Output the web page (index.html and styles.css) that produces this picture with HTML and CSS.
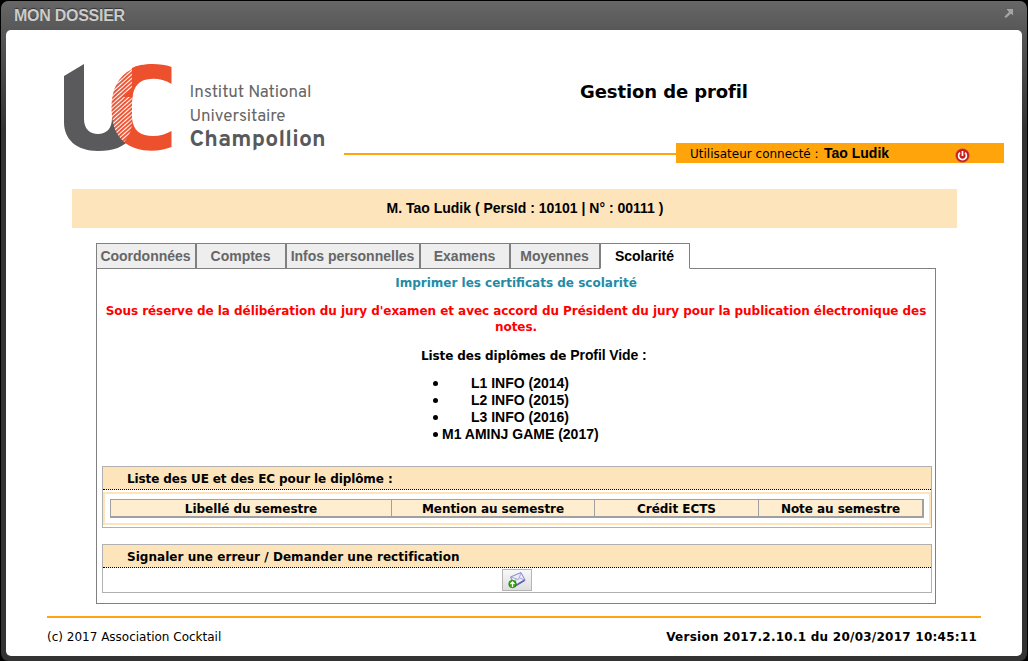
FILE: index.html
```html
<!DOCTYPE html>
<html lang="fr">
<head>
<meta charset="utf-8">
<title>Mon dossier</title>
<link rel="stylesheet" href="styles.css">
</head>
<body>
<div class="window">
  <div class="titlebar">
    <span class="caption">MON DOSSIER</span>
    <svg class="expand" width="13" height="13" viewBox="0 0 13 13"><path d="M3.500 1.500h8v8l-2.500-2.500-5 4.500-2-2L6.500 5z" fill="#a5a5a5" stroke="#4c4c4c" stroke-width=".6"/></svg>
  </div>
  <main class="panel">
    <header class="header">
      <svg class="logo" width="280" height="105" viewBox="60 55 280 105">
        <defs>
          <pattern id="hatch" width="3" height="3" patternUnits="userSpaceOnUse" patternTransform="rotate(-42)">
            <rect width="3" height="3" fill="#fff"/><rect width="3" height="1.900" fill="#ed502d"/>
          </pattern>
        </defs>
        <path d="M64 76L84 64V119C84 129 90 134 98 134C106 134 112 129 112 118H132V138C123 147 114 151 98 151C76 151 64 139 64 122Z" fill="#5a5a5c"/>
        <path d="M132 68C139 64 158 62 171.500 67V84C161 77 148 78 142 81C134 85 132 94 132 106V118C133 131 141 136 153 136C160 136 166 134 171.500 131V147C157 153 135 152 124 142Z" fill="#ed502d"/>
        <path d="M132 69C118 76 111 90 111.500 109C112 124 115 134 124 142C129 136 132 130 132 122Z" fill="url(#hatch)"/>
        <path d="M132.500 87V97H123Z" fill="#ed502d"/>
        <text x="189.500" y="97" textLength="122" class="logo-light">Institut National</text>
        <text x="189.500" y="120.500" textLength="96" class="logo-light">Universitaire</text>
        <text x="189.500" y="146" textLength="136" class="logo-bold">Champollion</text>
      </svg>
      <div class="heading">
        <h1>Gestion de profil</h1>
        <div class="user-row">
          <div class="rule"></div>
          <div class="user"><span class="user-label">Utilisateur connecté :</span><b>Tao Ludik</b>
            <svg class="power" width="15" height="15" viewBox="0 0 15 15"><circle cx="7.500" cy="7.500" r="7" fill="#c81e1c" stroke="#d98a66" stroke-width=".6"/><path d="M5 4.700a3.900 3.900 0 1 0 5 0M7.500 3v5" fill="none" stroke="#fff" stroke-width="1.700"/></svg>
          </div>
        </div>
      </div>
    </header>
    <div class="identity">M. Tao Ludik ( PersId : 10101 | N° : 00111 )</div>
    <nav class="tabs">
      <span class="tab">Coordonnées</span><span class="tab">Comptes</span><span class="tab">Infos personnelles</span><span class="tab">Examens</span><span class="tab">Moyennes</span><span class="tab active">Scolarité</span>
    </nav>
    <section class="content">
      <a class="print">Imprimer les certificats de scolarité</a>
      <p class="warning">Sous réserve de la délibération du jury d'examen et avec accord du Président du jury pour la publication électronique des<br>notes.</p>
      <p class="list-title">Liste des diplômes de <span>Profil Vide :</span></p>
      <ul class="diplomas">
        <li>L1 INFO (2014)</li><li>L2 INFO (2015)</li><li>L3 INFO (2016)</li><li class="wide">M1 AMINJ GAME (2017)</li>
      </ul>
      <div class="box">
        <h2>Liste des UE et des EC pour le diplôme :</h2>
        <div class="inset">
          <div class="columns"><span>Libellé du semestre</span><span>Mention au semestre</span><span>Crédit ECTS</span><span>Note au semestre</span></div>
        </div>
      </div>
      <div class="box report">
        <h2>Signaler une erreur / Demander une rectification</h2>
        <button class="mail" aria-label="Envoyer">
          <svg width="20" height="18" viewBox="0 0 20 18"><path d="M3.500 6L14 1.500 18 9 8 15z" fill="#e9eafa" stroke="#8583c4"/><path d="M18 9L8 15" stroke="#6260ae" stroke-width="1.600"/><path d="M4 6l7.500 2.500L14 2M8 15l1-7M18 9l-5.500-2" fill="none" stroke="#9a99d0" stroke-width=".8"/><circle cx="5.500" cy="13" r="3.800" fill="#36a50d" stroke="#187500" stroke-width=".6"/><path d="M5.500 16v-5M3.500 13l2-2 2 2" fill="none" stroke="#fff" stroke-width="1.300"/></svg>
        </button>
      </div>
    </section>
    <footer class="footer"><span>(c) 2017 Association Cocktail</span><b>Version 2017.2.10.1 du 20/03/2017 10:45:11</b></footer>
  </main>
</div>
</body>
</html>
```
FILE: styles.css
```css
* { box-sizing: border-box; }
body { margin: 0; background: #000; font-family: "DejaVu Sans", Verdana, sans-serif; font-size: 12px; color: #000; }
.window { width: 1028px; height: 661px; border: 1px solid #000; border-bottom: 0; border-radius: 8px; padding: 0 5px 5px; background: linear-gradient(#676767, #575757 30px, #333 130px, #333); overflow: hidden; }
.titlebar { height: 29px; display: flex; justify-content: space-between; padding: 6px 7px 0 8px; }
.caption { font: bold 16px/18px "Liberation Sans", Arial, sans-serif; color: #ccc; letter-spacing: -.27px; text-shadow: 0 -1px 1px #333; }
.panel { height: 626px; background: #fff; border-radius: 5px; overflow: hidden; }
.header { display: flex; height: 133px; }
.logo { margin: 25px 4px 0 54px; flex: none; }
.logo-light { font: 17px "Overpass", Roboto, sans-serif; fill: #666; }
.logo-bold { font: bold 23px "Overpass", Roboto, sans-serif; fill: #58595b; }
.heading { width: 660px; }
.heading h1 { margin: 0; height: 113px; padding: 51px 20px 0 0; text-align: center; font-size: 18px; line-height: 22px; letter-spacing: -.1px; }
.user-row { display: flex; }
.rule { width: 332px; height: 2px; margin-top: 10px; background: #ffa50b; }
.user { width: 328px; height: 20px; display: flex; background: #ffa50b; padding-left: 14px; line-height: 22px; }
.user-label { width: 134px; white-space: nowrap; }
.user b { width: 131px; font: bold 14px/21px "Liberation Sans", Arial, sans-serif; }
.power { margin-top: 5px; }
.identity { width: 885px; height: 39px; margin: 26px 0 0 66px; background: #fee4bb; font: bold 14px/39px "Liberation Sans", Arial, sans-serif; text-align: center; padding-left: 21px; }
.tabs { display: flex; margin: 15px 0 0 90px; position: relative; z-index: 1; }
.tab { width: 90px; height: 26px; border: 1px solid #808080; background: #eee; color: #666; text-align: center; white-space: nowrap; font: bold 14px/25px "Liberation Sans", Arial, sans-serif; padding-right: 1px; }
.tab:first-child { width: 100px; }
.tab:nth-child(3) { width: 134px; }
.tab.active { background: #fff; color: #000; border-bottom-color: #fff; }
.content { width: 840px; height: 336px; margin: -1px 0 0 90px; border: 1px solid #808080; padding: 6px 4px 0 5px; font-weight: bold; }
.print { display: block; padding-right: 1px; color: #248ba6; text-align: center; line-height: 16px; }
.warning { margin: 12px 0 0; padding-right: 1px; color: red; text-align: center; line-height: 16px; white-space: nowrap; letter-spacing: -.06px; }
.list-title { margin: 12px 0 0; padding-left: 319px; line-height: 16px; letter-spacing: -.1px; }
.list-title span { font: bold 14px/16px "Liberation Sans", Arial, sans-serif; }
.diplomas { list-style: none; margin: 11px 0 0 331px; padding: 0; font: bold 14px/17px "Liberation Sans", Arial, sans-serif; }
.diplomas li { display: flex; align-items: center; gap: 33px; }
.diplomas li::before { content: ""; width: 5px; height: 5px; margin-bottom: 1px; border-radius: 50%; background: #000; }
.diplomas li.wide { gap: 4px; }
.box { width: 830px; height: 62px; border: 1px solid #b0b0b0; margin-top: 23px; }
.box h2 { height: 23px; margin: 0; padding-left: 24px; background: #fee4bb; border-bottom: 1px dotted #000; font-size: 12px; line-height: 24px; letter-spacing: -.1px; }
.inset { height: 33px; margin: 2px 0 0; border: 2px solid #fee4bb; padding: 5px 5px 0; }
.columns { display: grid; grid-template-columns: 280px 203px 164px 164px; height: 19px; width: 814px; border: 1px solid #a0a0a0; border-width: 1px 2px 2px 1px; background: #ffedd0; line-height: 18px; text-align: center; letter-spacing: -.05px; }
.columns span + span { border-left: 1px solid #a0a0a0; }
.report { height: 49px; margin-top: 16px; }
.report h2 { letter-spacing: .04px; }
.mail { display: block; width: 30px; height: 22px; margin: 1px 0 0 399px; padding: 1px 4px; border: 1px solid #b5b5b5; background: linear-gradient(#f8f8f8, #dfdfdf); }
.mail svg { display: block; }
.footer { width: 934px; margin: 12px 0 0 41px; border-top: 2px solid #ffa50b; display: flex; justify-content: space-between; padding: 11px 4px 0 0; line-height: 16px; }
.footer b { letter-spacing: .25px; }
```
